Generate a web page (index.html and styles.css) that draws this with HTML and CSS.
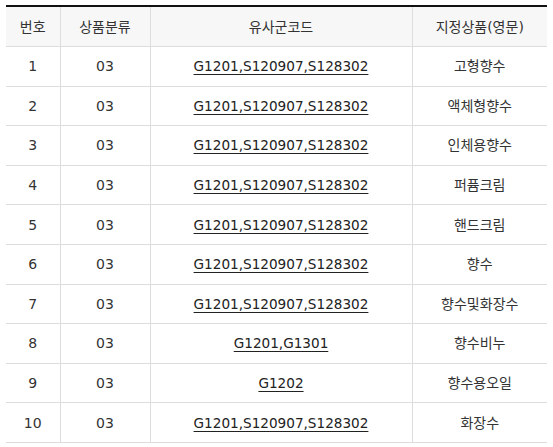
FILE: index.html
```html
<!DOCTYPE html>
<html lang="ko">
<head>
<meta charset="utf-8">
<link rel="stylesheet" href="styles.css">
</head>
<body>
<table class="goods">
  <colgroup>
    <col class="c-no">
    <col class="c-cls">
    <col class="c-code">
    <col class="c-name">
  </colgroup>
  <thead>
    <tr><th>번호</th><th>상품분류</th><th>유사군코드</th><th>지정상품(영문)</th></tr>
  </thead>
  <tbody>
    <tr><td>1</td><td>03</td><td><a class="code">G1201,S120907,S128302</a></td><td>고형향수</td></tr>
    <tr><td>2</td><td>03</td><td><a class="code">G1201,S120907,S128302</a></td><td>액체형향수</td></tr>
    <tr><td>3</td><td>03</td><td><a class="code">G1201,S120907,S128302</a></td><td>인체용향수</td></tr>
    <tr><td>4</td><td>03</td><td><a class="code">G1201,S120907,S128302</a></td><td>퍼퓸크림</td></tr>
    <tr><td>5</td><td>03</td><td><a class="code">G1201,S120907,S128302</a></td><td>핸드크림</td></tr>
    <tr><td>6</td><td>03</td><td><a class="code">G1201,S120907,S128302</a></td><td>향수</td></tr>
    <tr><td>7</td><td>03</td><td><a class="code">G1201,S120907,S128302</a></td><td>향수및화장수</td></tr>
    <tr><td>8</td><td>03</td><td><a class="code">G1201,G1301</a></td><td>향수비누</td></tr>
    <tr><td>9</td><td>03</td><td><a class="code">G1202</a></td><td>향수용오일</td></tr>
    <tr><td>10</td><td>03</td><td><a class="code">G1201,S120907,S128302</a></td><td>화장수</td></tr>
  </tbody>
</table>
</body>
</html>
```
FILE: styles.css
```css
html, body {
  margin: 0;
  padding: 0;
  background: #fff;
}
body {
  padding: 5px 6px 0 6px;
  font-family: "DejaVu Sans", "Noto Sans CJK KR", sans-serif;
  font-size: 14px;
  color: #333;
}
.goods {
  width: 541px;
  border-collapse: collapse;
  table-layout: fixed;
  border-top: 2px solid #111;
}
.c-no { width: 54px; }
.c-cls { width: 90px; }
.c-code { width: 262px; }
.c-name { width: 135px; }
.goods th,
.goods td {
  padding: 0;
  text-align: center;
  border-bottom: 1px solid #ddd;
  border-left: 1px solid #ddd;
  line-height: 20px;
}
.goods th:first-child,
.goods td:first-child {
  border-left: none;
}
.goods th {
  height: 39px;
  background: #f7f7f7;
  font-weight: normal;
  color: #333;
}
.goods td {
  height: 38.6px;
}
.code {
  color: #222;
  font-size: 13.6px;
  text-decoration: underline;
  text-underline-offset: 3px;
}
```
